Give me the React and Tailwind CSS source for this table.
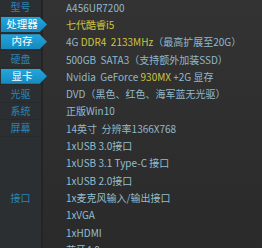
import React from 'react';

const Y = 'text-[#cdc43f]';

const specs = [
  { label: '型号', value: <>A456UR7200</> },
  { label: '处理器', active: true, value: <span className={Y}>七代酷睿i5</span> },
  {
    label: '内存',
    active: true,
    value: (
      <>
        4G <span className={Y}>DDR4  2133MHz</span>（最高扩展至20G）
      </>
    ),
  },
  { label: '硬盘', value: <>500GB  SATA3（支持额外加装SSD）</> },
  {
    label: '显卡',
    active: true,
    value: (
      <>
        Nvidia  GeForce <span className={Y}>930MX</span> +2G 显存
      </>
    ),
  },
  { label: '光驱', value: <>DVD（黑色、红色、海军蓝无光驱）</> },
  { label: '系统', value: <>正版Win10</> },
  { label: '屏幕', value: <>14英寸  分辨率1366X768</> },
];

const ports = [
  '1xUSB 3.0接口',
  '1xUSB 3.1 Type-C 接口',
  '1xUSB 2.0接口',
  '1x麦克风输入/输出接口',
  '1xVGA',
  '1xHDMI',
  '蓝牙4.0',
];

const Label = ({ text, active }) => {
  if (active) {
    return (
      <div className="flex items-center h-full bg-[#2c2f32] border-r-2 border-b border-r-[#232425] border-b-[#27292b]">
        <div className="ml-[1px] w-[46px] h-[15px] shrink-0 flex items-center justify-center pr-[4px] text-[10.5px] bg-gradient-to-b from-[#22a6de] to-[#1689bd] text-white [clip-path:polygon(0_0,84%_0,100%_50%,84%_100%,0_100%)]">
          {text}
        </div>
      </div>
    );
  }
  return (
    <div className="flex items-center justify-center h-full bg-[#2c2f32] border-r-2 border-b border-r-[#232425] border-b-[#27292b] text-[#2a85b6]">
      {text}
    </div>
  );
};

export default function App() {
  return (
    <div
      className="w-[262px] h-[248px] overflow-hidden bg-gradient-to-b from-[#333333] to-[#2a2a2a] text-[10px] leading-none"
      style={{ fontFamily: '"Noto Sans CJK SC", "Noto Sans", sans-serif' }}
    >
      <div className="grid grid-cols-[43px_1fr] auto-rows-[17.3px] -mt-px">
        {specs.map((s) => (
          <React.Fragment key={s.label}>
            <Label text={s.label} active={s.active} />
            <div className="flex items-center pl-[23px] whitespace-pre text-[#92b9cc]">
              {s.value}
            </div>
          </React.Fragment>
        ))}
        <div className="row-span-7 flex items-center justify-center bg-[#2c2f32] border-r-2 border-[#232425] text-[#2a85b6]">
          接口
        </div>
        {ports.map((p) => (
          <div key={p} className="flex items-center pl-[23px] whitespace-pre text-[#92bfd0]">
            {p}
          </div>
        ))}
      </div>
    </div>
  );
}
